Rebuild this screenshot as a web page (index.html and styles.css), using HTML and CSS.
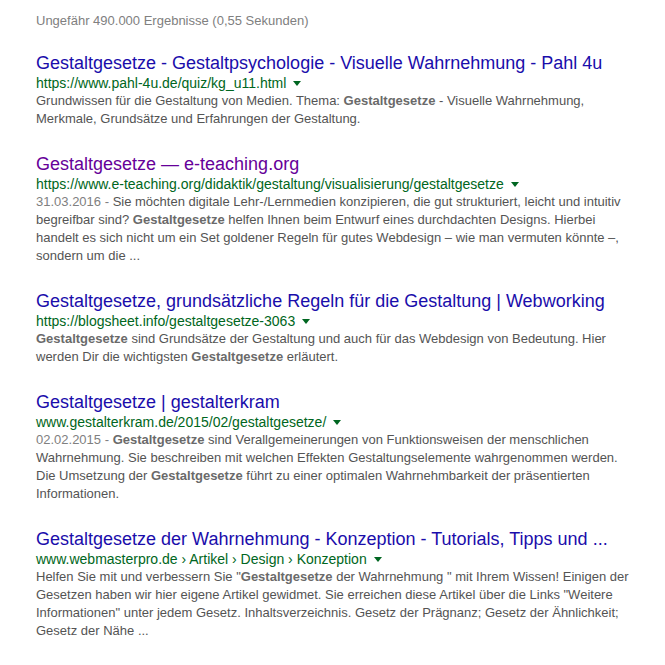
FILE: index.html
```html
<!DOCTYPE html>
<html lang="de">
<head>
<meta charset="utf-8">
<link rel="stylesheet" href="styles.css">
</head>
<body>
<div class="page">
  <div class="stats">Ungefähr 490.000 Ergebnisse (0,55 Sekunden)</div>

  <div class="result">
    <a class="title">Gestaltgesetze - Gestaltpsychologie - Visuelle Wahrnehmung - Pahl 4u</a>
    <div class="url">https://www.pahl-4u.de/quiz/kg_u11.html<span class="arrow"></span></div>
    <div class="snippet">Grundwissen für die Gestaltung von Medien. Thema: <b>Gestaltgesetze</b> - Visuelle Wahrnehmung, Merkmale, Grundsätze und Erfahrungen der Gestaltung.</div>
  </div>

  <div class="result">
    <a class="title visited">Gestaltgesetze — e-teaching.org</a>
    <div class="url">https://www.e-teaching.org/didaktik/gestaltung/visualisierung/gestaltgesetze<span class="arrow"></span></div>
    <div class="snippet"><span class="date">31.03.2016 - </span>Sie möchten digitale Lehr-/Lernmedien konzipieren, die gut strukturiert, leicht und intuitiv begreifbar sind? <b>Gestaltgesetze</b> helfen Ihnen beim Entwurf eines durchdachten Designs. Hierbei handelt es sich nicht um ein Set goldener Regeln für gutes Webdesign – wie man vermuten könnte –, sondern um die ...</div>
  </div>

  <div class="result">
    <a class="title">Gestaltgesetze, grundsätzliche Regeln für die Gestaltung | Webworking</a>
    <div class="url">https://blogsheet.info/gestaltgesetze-3063<span class="arrow"></span></div>
    <div class="snippet"><b>Gestaltgesetze</b> sind Grundsätze der Gestaltung und auch für das Webdesign von Bedeutung. Hier werden Dir die wichtigsten <b>Gestaltgesetze</b> erläutert.</div>
  </div>

  <div class="result">
    <a class="title">Gestaltgesetze | gestalterkram</a>
    <div class="url">www.gestalterkram.de/2015/02/gestaltgesetze/<span class="arrow"></span></div>
    <div class="snippet"><span class="date">02.02.2015 - </span><b>Gestaltgesetze</b> sind Verallgemeinerungen von Funktionsweisen der menschlichen Wahrnehmung. Sie beschreiben mit welchen Effekten Gestaltungselemente wahrgenommen werden. Die Umsetzung der <b>Gestaltgesetze</b> führt zu einer optimalen Wahrnehmbarkeit der präsentierten Informationen.</div>
  </div>

  <div class="result">
    <a class="title">Gestaltgesetze der Wahrnehmung - Konzeption - Tutorials, Tipps und ...</a>
    <div class="url">www.webmasterpro.de › Artikel › Design › Konzeption<span class="arrow"></span></div>
    <div class="snippet">Helfen Sie mit und verbessern Sie "<b>Gestaltgesetze</b> der Wahrnehmung " mit Ihrem Wissen! Einigen der Gesetzen haben wir hier eigene Artikel gewidmet. Sie erreichen diese Artikel über die Links "Weitere Informationen" unter jedem Gesetz. Inhaltsverzeichnis. Gesetz der Prägnanz; Gesetz der Ähnlichkeit; Gesetz der Nähe ...</div>
  </div>
</div>
</body>
</html>
```

FILE: styles.css
```css
html, body {
  margin: 0;
  padding: 0;
  background: #ffffff;
}

body {
  font-family: "Liberation Sans", Arial, sans-serif;
}

.page {
  padding: 11px 0 0 36px;
  width: 600px;
}

.stats {
  font-size: 13px;
  line-height: 20px;
  color: #808080;
  margin-bottom: 21px;
}

.result {
  margin-bottom: 25px;
}

.title {
  display: block;
  font-size: 18px;
  line-height: 22px;
  color: #1a0dab;
  text-decoration: none;
  white-space: nowrap;
}

.title.visited {
  color: #660099;
}

.url {
  font-size: 14px;
  line-height: 18px;
  color: #006621;
  white-space: nowrap;
}

.arrow {
  display: inline-block;
  margin-left: 7px;
  vertical-align: middle;
  width: 0;
  height: 0;
  border-left: 4px solid transparent;
  border-right: 4px solid transparent;
  border-top: 5px solid #006621;
  position: relative;
  top: -1px;
}

.snippet {
  font-size: 13px;
  line-height: 18px;
  color: #545454;
}

.snippet b {
  color: #6a6a6a;
  font-weight: bold;
}

.date {
  color: #808080;
}
```
